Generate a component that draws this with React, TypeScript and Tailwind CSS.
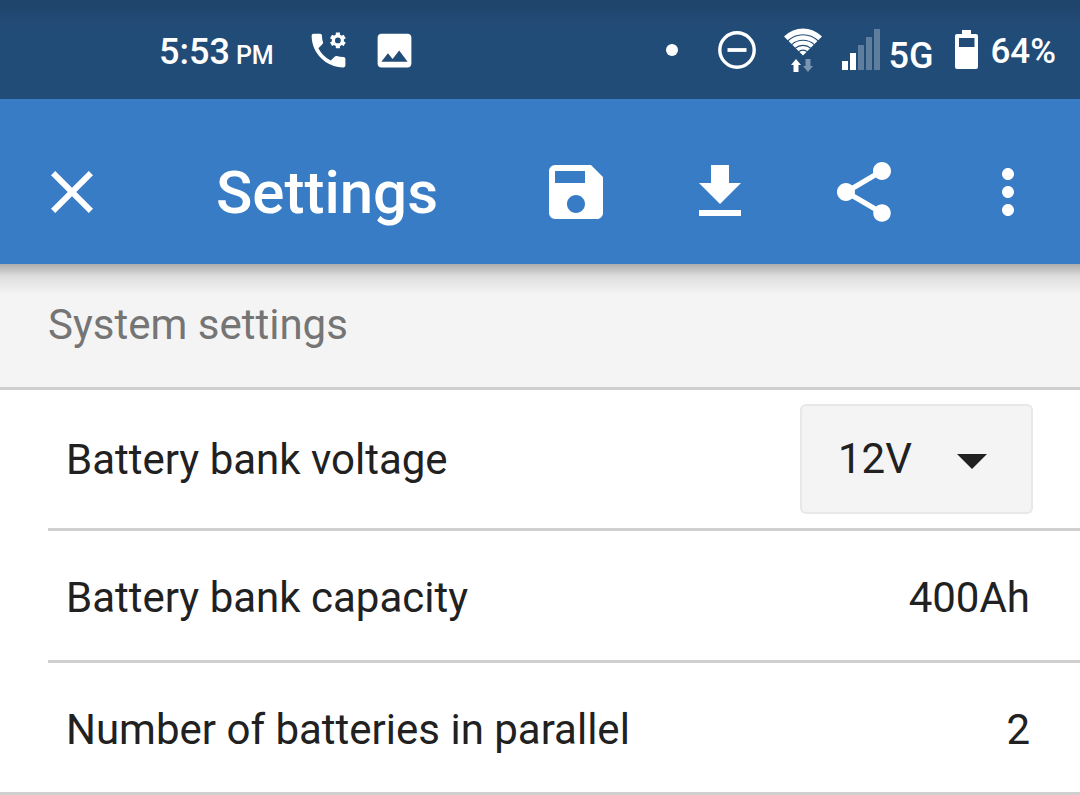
import React, { useState } from 'react';
import { MdArrowDropDown, MdClose, MdFileDownload, MdImage, MdMoreVert, MdSave, MdShare } from 'react-icons/md';

function PhoneSettingsIcon() {
  return (
    <svg viewBox="0 0 24 24" className="size-[45px]" fill="currentColor" aria-hidden="true">
      <path d="M20 15.5c-1.25 0-2.45-.2-3.57-.57a1.02 1.02 0 0 0-1.02.24l-2.2 2.2a15.045 15.045 0 0 1-6.59-6.59l2.2-2.21a.96.96 0 0 0 .25-1A11.36 11.36 0 0 1 8.500 4c0-.55-.45-1-1-1H4c-.55 0-1 .45-1 1 0 9.39 7.61 17 17 17 .55 0 1-.45 1-1v-3.5c0-.55-.45-1-1-1z" />
      <g transform="translate(17 6.6)" fill="none" stroke="currentColor">
        <circle r="2.4" strokeWidth="1.7" />
        {[0, 60, 120, 180, 240, 300].map((angle) => (
          <path key={angle} d="M0-2.7V-4.2" strokeWidth="2.2" transform={`rotate(${angle})`} />
        ))}
      </g>
    </svg>
  );
}

function DoNotDisturbIcon() {
  return (
    <svg viewBox="0 0 38 38" className="size-[38px]" fill="none" stroke="currentColor" aria-hidden="true">
      <circle cx="19" cy="19" r="17.2" strokeWidth="3.4" />
      <path d="M9.5 19h19" strokeWidth="3.8" />
    </svg>
  );
}

function WifiIcon() {
  return (
    <svg viewBox="0 0 38 44" className="h-11 w-[38px]" aria-hidden="true">
      <path d="M0 8.5C11-2.2 27-2.2 38 8.5L19 27.5z" fill="currentColor" />
      <g fill="none" stroke="#224b76" strokeWidth="1.1">
        <path d="M3.6 13C12.6 4.6 25.4 4.6 34.4 13" />
        <path d="M7.4 16.8c6.6-6 16.6-6 23.2 0" />
        <path d="M11 20.4c4.6-4 11.4-4 16 0" />
        <path d="M14.4 23.8c2.6-2.2 6.6-2.2 9.2 0" />
      </g>
      <path d="M12 31l5 6h-2.5v7h-5v-7H7z" fill="currentColor" />
      <path d="M24 44l-5-6h2.5v-7h5v7H29z" fill="#7b94af" />
    </svg>
  );
}

function SignalIcon() {
  return (
    <svg viewBox="0 0 38 41" className="h-[41px] w-[38px]" aria-hidden="true">
      <path d="M0 32h6v9H0zM8 24h6v17H8z" fill="#fff" />
      <path d="M16 16h6v25h-6zM24 8h6v33h-6zM32 0h6v41h-6z" fill="#5f7d9d" />
    </svg>
  );
}

function BatteryIcon() {
  return (
    <svg viewBox="0 0 23 39" className="h-[39px] w-[23px]" fill="currentColor" aria-hidden="true">
      <path fillRule="evenodd" d="M7 0h9v4h5a2 2 0 0 1 2 2v31a2 2 0 0 1-2 2H2a2 2 0 0 1-2-2V6a2 2 0 0 1 2-2h5zM4 8v9h15.5V8z" />
    </svg>
  );
}

function StatusBar() {
  return (
    <div className="flex h-[99px] items-center justify-between bg-linear-to-b from-[#20446b] to-[#224c78] to-30% pr-6 pl-[159px] font-medium text-white">
      <div className="flex items-center">
        <p className="flex items-baseline gap-1.5 pt-2 leading-10">
          <span className="text-[36px]">5:53</span>
          <span className="text-[25px]">PM</span>
        </p>
        <div className="ml-8 flex items-center gap-[21px] pt-0.5">
          <PhoneSettingsIcon />
          <MdImage className="size-[45px]" />
        </div>
      </div>
      <div className="flex items-center">
        <span className="mr-10 size-3 rounded-full bg-white" />
        <DoNotDisturbIcon />
        <span className="ml-7"><WifiIcon /></span>
        <span className="ml-5"><SignalIcon /></span>
        <span className="ml-2 pt-3 text-[36px] leading-10">5G</span>
        <span className="ml-[22px]"><BatteryIcon /></span>
        <span className="ml-3 pt-1 text-[35px] leading-10">64%</span>
      </div>
    </div>
  );
}

function AppBar() {
  return (
    <header className="flex items-center bg-[#387cc5] px-9 pt-[21px] text-white">
      <button type="button" aria-label="Close" className="py-9">
        <MdClose className="size-[72px]" />
      </button>
      <h1 className="ml-[108px] flex-1 pt-0.5 text-[60px] leading-[74px] font-medium">Settings</h1>
      <div className="flex items-center gap-[72px]">
        <button type="button" aria-label="Save"><MdSave className="size-[72px]" /></button>
        <button type="button" aria-label="Download"><MdFileDownload className="size-[72px]" /></button>
        <button type="button" aria-label="Share"><MdShare className="size-[72px]" /></button>
        <button type="button" aria-label="More options"><MdMoreVert className="size-[72px]" /></button>
      </div>
    </header>
  );
}

function ValueRow({ label, value }: { label: string; value: string }) {
  return (
    <button type="button" className="flex h-[129px] w-full items-center justify-between pt-1 pr-[50px] pl-[18px] text-left">
      <span>{label}</span>
      <span>{value}</span>
    </button>
  );
}

export default function App() {
  const [voltage, setVoltage] = useState('12V');

  return (
    <div className="bg-white font-[Roboto,sans-serif] text-[42px] leading-[50px] text-[#212121]">
      <StatusBar />
      <AppBar />
      <main>
        <h2 className="flex h-[126px] items-center border-b-3 border-[#cfcfcf] bg-linear-to-b from-[#adadad] via-[#dedede] via-10% to-[#f4f4f4] to-25% px-12 pb-0.5 text-[#757575]">
          System settings
        </h2>
        <div className="border-b-3 border-[#cfcfcf] pl-12">
          <div className="flex h-[141px] items-center justify-between border-b-3 border-[#cfcfcf] pr-[47px] pl-[18px]">
            <label htmlFor="voltage" className="pt-0.5">Battery bank voltage</label>
            <div className="relative">
              <select
                id="voltage"
                value={voltage}
                onChange={(e) => setVoltage(e.target.value)}
                className="block h-[110px] w-[233px] appearance-none rounded-md border-2 border-[#e8e8e8] bg-[#f4f4f4] pr-20 pl-9"
              >
                <option>12V</option>
                <option>24V</option>
                <option>48V</option>
              </select>
              <MdArrowDropDown className="pointer-events-none absolute top-5 right-[25px] size-[72px]" />
            </div>
          </div>
          <div className="border-b-3 border-[#cfcfcf]">
            <ValueRow label="Battery bank capacity" value="400Ah" />
          </div>
          <ValueRow label="Number of batteries in parallel" value="2" />
        </div>
      </main>
    </div>
  );
}
